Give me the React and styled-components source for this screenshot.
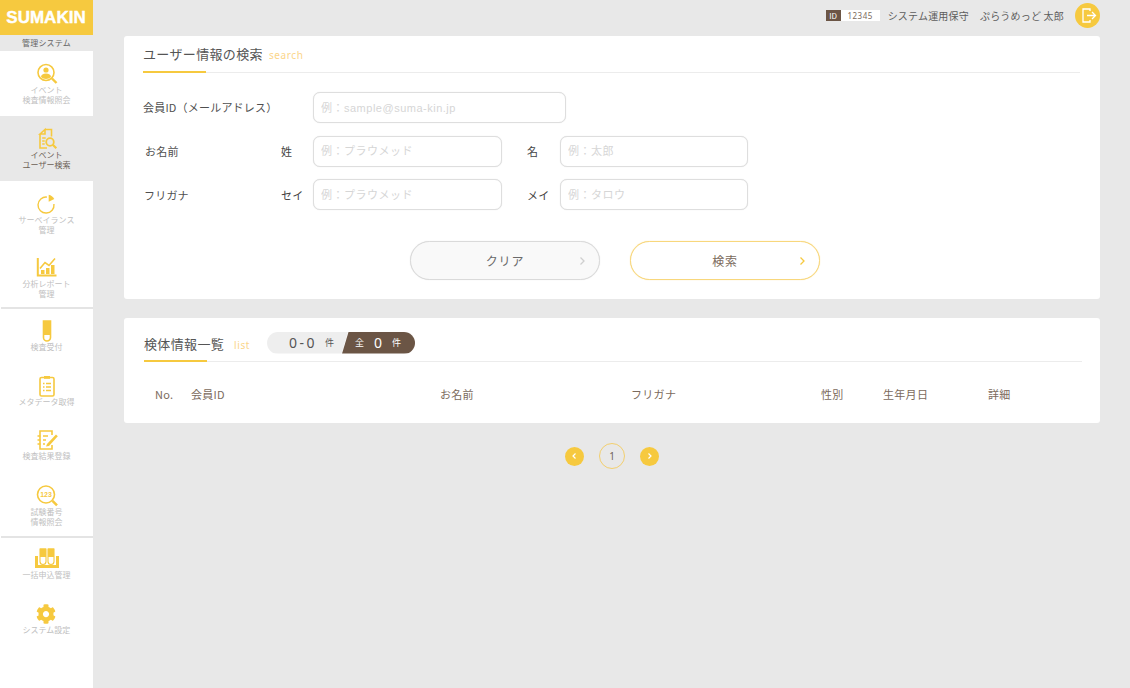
import React from "react";
import styled, { createGlobalStyle } from "styled-components";
import { FaCog } from "react-icons/fa";

const Y = "#f6c93f";
const JP = `"Noto Sans CJK JP", "Noto Sans", sans-serif`;

const Global = createGlobalStyle`
  html, body { margin: 0; padding: 0; background: #e8e8e8; }
  body { font-family: ${JP}; color: #555; }
  * { box-sizing: border-box; }
`;

const Page = styled.div`display: flex; width: 1130px; height: 688px; overflow: hidden; background: #e8e8e8;`;
const Sidebar = styled.aside`width: 93px; flex: none; background: #fff; display: flex; flex-direction: column;`;
const Logo = styled.div`
  height: 35px; background: ${Y}; color: #fff; display: flex; align-items: center; justify-content: center;
  font: bold 17px "Liberation Sans", Arial, sans-serif; -webkit-text-stroke: .4px #fff; padding-right: 1px;
`;
const SubLogo = styled.div`
  height: 16px; background: #e8e8e8; color: #666; font-size: 8px; line-height: 16px; text-align: center; letter-spacing: .2px;
`;
const NavItem = styled.div`
  height: ${p => p.$h}px; padding-top: ${p => p.$pt}px; display: flex; flex-direction: column; align-items: center; flex: none;
  background: ${p => (p.$active ? "#e8e8e8" : "#fff")};
  color: ${p => (p.$active ? "#6b6055" : "#c0c0c0")};
  font-size: 8px; line-height: 10px; text-align: center; white-space: pre-line;
`;
const NavIcon = styled.svg`width: 24px; height: 24px; display: block; flex: none; fill: none; stroke: ${Y}; stroke-width: 1.6;`;
const GearBox = styled.div`height: 24px; display: flex; align-items: center; color: ${Y}; font-size: 20px; margin-left: -1px;`;
const NavLabel = styled.div`margin-top: -1px;`;
const Divider = styled.div`height: 2px; margin-left: 1px; background: #e4e4e4; flex: none;`;

const Main = styled.main`flex: 1; padding: 0 30px 0 31px; min-width: 0;`;
const Header = styled.header`
  height: 36px; padding-top: 3px; display: flex; justify-content: flex-end; align-items: flex-start; gap: 11px;
  font-size: 10px; letter-spacing: .2px; color: #5c5c5c;
`;
const HeaderLine = styled.div`height: 25px; display: flex; align-items: center;`;
const IdChip = styled.span`
  background: #6b5545; color: #fff; width: 15px; height: 11px; font-size: 8px; line-height: 11px; text-align: center; letter-spacing: 0;
`;
const IdValue = styled.span`
  background: #fff; color: #7b6a5c; width: 39px; height: 11px; font: 8px/11px "Noto Sans", sans-serif; text-align: center; margin-right: 8px; letter-spacing: .5px;
`;
const UserName = styled.span`margin-left: 11px;`;
const Logout = styled.svg`width: 25px; height: 25px; display: block; flex: none;`;

const Card = styled.section`
  background: #fff; border-radius: 3px; padding: ${p => p.$pad}; margin-top: ${p => p.$mt || 0}px;
`;
const TitleRow = styled.div`
  position: relative; height: ${p => p.$h}px; display: flex; align-items: center; padding: ${p => p.$pt}px 0 ${p => p.$pb}px;
  border-bottom: 1px solid #ececec;
  &::after { content: ""; position: absolute; left: 0; bottom: -1px; width: 63px; height: 2px; background: ${Y}; }
`;
const Title = styled.h2`margin: 0; font-size: 13px; font-weight: 400; letter-spacing: .35px; color: #555;`;
const TitleEn = styled.span`font: 10px "Noto Sans", sans-serif; color: #fbd58a; letter-spacing: .6px; margin-left: ${p => p.$ml}px; padding-top: 2px;`;

const Form = styled.div`margin-top: 19px; display: flex; flex-direction: column; gap: 12.5px;`;
const Row = styled.div`display: flex; align-items: center; height: 31px;`;
const Label = styled.label`width: ${p => p.$w || 138}px; flex: none; padding-left: ${p => p.$indent || 0}px; margin-top: ${p => p.$mt || 0}px; font-size: 11px; color: #4f4f4f; letter-spacing: .2px;`;
const SubLabel = styled.label`width: ${p => p.$w}px; margin-left: ${p => p.$ml || 0}px; flex: none; font-size: 11px; color: #444; letter-spacing: .3px;`;
const Input = styled.input`
  width: ${p => p.$w}px; height: 31px; border: 1px solid #dedede; box-shadow: 0 0 1px #dedede; border-radius: 7px; padding: 0 7px; outline: none; background: #fff;
  font: 11px "Liberation Sans", "Noto Sans CJK JP", sans-serif; letter-spacing: .5px;
  &::placeholder { color: #d6d6d6; opacity: 1; }
`;
const Buttons = styled.div`margin-top: 31px; padding-left: 7px; display: flex; justify-content: center; gap: 30px;`;
const Btn = styled.button`
  width: 190px; height: 39px; border-radius: 20px; padding: 0 14px; display: grid; grid-template-columns: 1fr auto 1fr; align-items: center;
  font: 12px ${JP}; letter-spacing: .8px; color: ${p => (p.$primary ? "#7b6a5c" : "#6a6a6a")};
  background: ${p => (p.$primary ? "#fff" : "#f9f9f9")};
  border: 1px solid ${p => (p.$primary ? "#f8d77c" : "#dadada")};
  box-shadow: 0 0 1px ${p => (p.$primary ? "#f8d77c" : "#dadada")};
`;
const Chevron = styled.svg`width: 6px; height: 8px; justify-self: end; fill: none; stroke: ${p => p.$c}; stroke-width: 1.3;`;

const Count = styled.div`display: flex; margin-left: 17px; height: 22px; color: #555; margin-top: -2px;`;
const CountLeft = styled.div`
  width: 81px; background: #eeeeee; border-radius: 11px 0 0 11px; clip-path: polygon(0 0, 100% 0, 92% 100%, 0 100%);
  display: flex; align-items: center; padding-left: 22px; font: 14px "Noto Sans", sans-serif; letter-spacing: 2.5px;
`;
const CountRight = styled.div`
  width: 73px; margin-left: -6px; background: #6b5545; color: #fff; border-radius: 0 11px 11px 0; clip-path: polygon(9% 0, 100% 0, 100% 100%, 0 100%);
  display: flex; align-items: center; padding-left: 13px; font: 14px "Noto Sans", sans-serif;
`;
const CountUnit = styled.span`font: 9px ${JP}; margin-left: ${p => p.$ml}px; letter-spacing: 0;`;
const CountValue = styled.span`margin-left: 10px;`;

const TableHead = styled.div`
  display: grid; grid-template-columns: 36px 249px 191px 190px 62px 105px 1fr; height: 61px; padding: 3px 0 0 11px; align-items: center;
  font-size: 11px; color: #7b6a5c; letter-spacing: .3px;
`;
const Pager = styled.nav`margin-top: 20px; display: flex; justify-content: center; align-items: center; gap: 15px;`;
const PageDot = styled.span`width: 19px; height: 19px; border-radius: 50%; background: ${Y}; display: flex; align-items: center; justify-content: center;`;
const PageNum = styled.span`
  width: 26px; height: 26px; border-radius: 50%; border: 1.5px solid #f3cf6e; display: flex; align-items: center; justify-content: center;
  font: 10px "Noto Sans", sans-serif; color: #6f6257;
`;
const DotChevron = styled.svg`width: 5px; height: 6px; fill: none; stroke: #fff; stroke-width: 1.2;`;

const icons = {
  user: (<>
    <circle cx="11" cy="10.500" r="8" />
    <circle cx="11" cy="8" r="2.600" fill={Y} stroke="none" />
    <path d="M6 15c0-2.400 2.200-3.600 5-3.600s5 1.200 5 3.600c-1.200 1.200-3 2-5 2s-3.800-.8-5-2z" fill={Y} stroke="none" />
    <path d="M17 16.500l4.500 4.500" strokeWidth="2.400" />
  </>),
  doc: (<>
    <path d="M10 2.500h6.500v7M5 7l5-4.500V7zM5 7v14h7" />
    <path d="M7.200 11h3.500M7.200 14h2.500M7.200 17h2.500" />
    <circle cx="15" cy="15" r="3.800" strokeWidth="1.800" />
    <path d="M17.800 17.800l3.500 3.500" strokeWidth="2.200" />
  </>),
  pie: (<>
    <path d="M12 5.100A8 8 0 1 0 18.950 12" strokeWidth="1.400" />
    <path d="M13.700 2.800c2.400.6 4.300 2 5.600 4.200l-5.600 2.700z" fill={Y} stroke="none" />
  </>),
  chart: (<>
    <path d="M2.800 2v17.500h18.700" strokeWidth="2" />
    <path d="M6 18v-4h3.500v4zM11 18v-6h3.500v6zM16 18v-9h3.500v9z" fill={Y} stroke="none" />
    <path d="M5 12.500l5-6 4 3 6-7" strokeWidth="1.600" />
  </>),
  tube: (<>
    <path d="M8.500 2h7v16.500a3.500 3.500 0 0 1-7 0z" />
    <path d="M8.500 2h7v14h-7z" fill={Y} stroke="none" />
  </>),
  clip: (<>
    <rect x="5" y="3.500" width="14" height="18.500" rx="1.500" />
    <path d="M9 2h6v2.800H9z" fill={Y} stroke="none" />
    <path d="M8 9.500h1.500M11 9.500h5M8 13h1.500M11 13h5M8 16.500h1.500M11 16.500h5" />
  </>),
  note: (<>
    <path d="M17 7V3H5v18h12v-4" />
    <path d="M2.500 8h3M2.500 12h3M2.500 16h3" />
    <path d="M8 8h5M8 12h3M8 16h2" />
    <path d="M12 16l9-9.500 1.800 1.800-8.800 9.700-3 .5z" fill={Y} stroke="none" />
  </>),
  number: (<>
    <circle cx="11" cy="10.500" r="8.500" />
    <path d="M17.500 16.800l4.500 4.500" strokeWidth="2.400" />
    <text x="11" y="13" textAnchor="middle" fontSize="7" fontWeight="700" fontFamily="Liberation Sans" fill={Y} stroke="none">123</text>
  </>),
  rack: (<>
    <path d="M0 9h3v9h18V9h3v12H0z" fill={Y} stroke="none" />
    <path d="M5 2h6v12.500a3 3 0 0 1-6 0zM13 2h6v12.500a3 3 0 0 1-6 0z" strokeWidth="1.100" />
    <path d="M5 1.500h6V10H5zM13 1.500h6V10h-6z" fill={Y} stroke="none" />
  </>),
};

const Nav = ({ icon, h, pt = 11, active, children }) => (
  <NavItem $h={h} $pt={pt} $active={active}>
    {icon === "gear" ? <GearBox><FaCog /></GearBox> : <NavIcon viewBox="0 0 24 24">{icons[icon]}</NavIcon>}
    <NavLabel>{children}</NavLabel>
  </NavItem>
);

const Right = ({ c }) => <Chevron $c={c} viewBox="0 0 6 8"><path d="M1.500 .5L5 4 1.500 7.500" /></Chevron>;

export default function App() {
  return (
    <Page>
      <Global />
      <Sidebar>
        <Logo>SUMAKIN</Logo>
        <SubLogo>管理システム</SubLogo>
        <Nav icon="user" h={65}>{"イベント\n検査情報照会"}</Nav>
        <Nav icon="doc" h={65} active>{"イベント\nユーザー検索"}</Nav>
        <Nav icon="pie" h={64}>{"サーベイランス\n管理"}</Nav>
        <Nav icon="chart" h={62}>{"分析レポート\n管理"}</Nav>
        <Divider />
        <Nav icon="tube" h={54.5} pt={10}>検査受付</Nav>
        <Nav icon="clip" h={54.5} pt={10}>メタデータ取得</Nav>
        <Nav icon="note" h={54.5} pt={10}>検査結果登録</Nav>
        <Nav icon="number" h={63.5}>{"試験番号\n情報照会"}</Nav>
        <Divider />
        <Nav icon="rack" h={55} pt={9}>一括申込管理</Nav>
        <Nav icon="gear" h={55} pt={9}>システム設定</Nav>
      </Sidebar>
      <Main>
        <Header>
          <HeaderLine>
            <IdChip>ID</IdChip>
            <IdValue>12345</IdValue>
            <span>システム運用保守</span>
            <UserName>ぷらうめっど 太郎</UserName>
          </HeaderLine>
          <Logout viewBox="0 0 25 25">
            <circle cx="12.500" cy="12.500" r="12.500" fill={Y} />
            <path d="M15 8V6H8v13h7v-2M12 12.500h8M17 9l3.500 3.500L17 16" fill="none" stroke="#fff" strokeWidth="1.300" />
          </Logout>
        </Header>
        <Card $pad="0 20px 19px 19px">
          <TitleRow $h={37} $pt={0} $pb={1}>
            <Title>ユーザー情報の検索</Title>
            <TitleEn $ml={6}>search</TitleEn>
          </TitleRow>
          <Form>
            <Row>
              <Label $w={170} $mt={-2}>会員ID（メールアドレス）</Label>
              <Input $w={253} placeholder="例：sample@suma-kin.jp" />
            </Row>
            <Row>
              <Label $indent={2}>お名前</Label>
              <SubLabel $w={32}>姓</SubLabel>
              <Input $w={189} placeholder="例：プラウメッド" />
              <SubLabel $w={33} $ml={25}>名</SubLabel>
              <Input $w={188} placeholder="例：太郎" />
            </Row>
            <Row>
              <Label $indent={1}>フリガナ</Label>
              <SubLabel $w={32}>セイ</SubLabel>
              <Input $w={189} placeholder="例：プラウメッド" />
              <SubLabel $w={33} $ml={25}>メイ</SubLabel>
              <Input $w={188} placeholder="例：タロウ" />
            </Row>
          </Form>
          <Buttons>
            <Btn><span /><span>クリア</span><Right c="#cfcfcf" /></Btn>
            <Btn $primary><span /><span>検索</span><Right c="#f6c93f" /></Btn>
          </Buttons>
        </Card>
        <Card $pad="0 18px 0 20px" $mt={19}>
          <TitleRow $h={44} $pt={8} $pb={0}>
            <Title>検体情報一覧</Title>
            <TitleEn $ml={10}>list</TitleEn>
            <Count>
              <CountLeft>0-0<CountUnit $ml={8}>件</CountUnit></CountLeft>
              <CountRight><CountUnit $ml={0}>全</CountUnit><CountValue>0</CountValue><CountUnit $ml={10}>件</CountUnit></CountRight>
            </Count>
          </TitleRow>
          <TableHead>
            <span>No.</span><span>会員ID</span><span>お名前</span><span>フリガナ</span><span>性別</span><span>生年月日</span><span>詳細</span>
          </TableHead>
        </Card>
        <Pager>
          <PageDot><DotChevron viewBox="0 0 5 6"><path d="M3.500 .5L1 3l2.500 2.500" /></DotChevron></PageDot>
          <PageNum>1</PageNum>
          <PageDot><DotChevron viewBox="0 0 5 6"><path d="M1.500 .5L4 3 1.500 5.500" /></DotChevron></PageDot>
        </Pager>
      </Main>
    </Page>
  );
}
